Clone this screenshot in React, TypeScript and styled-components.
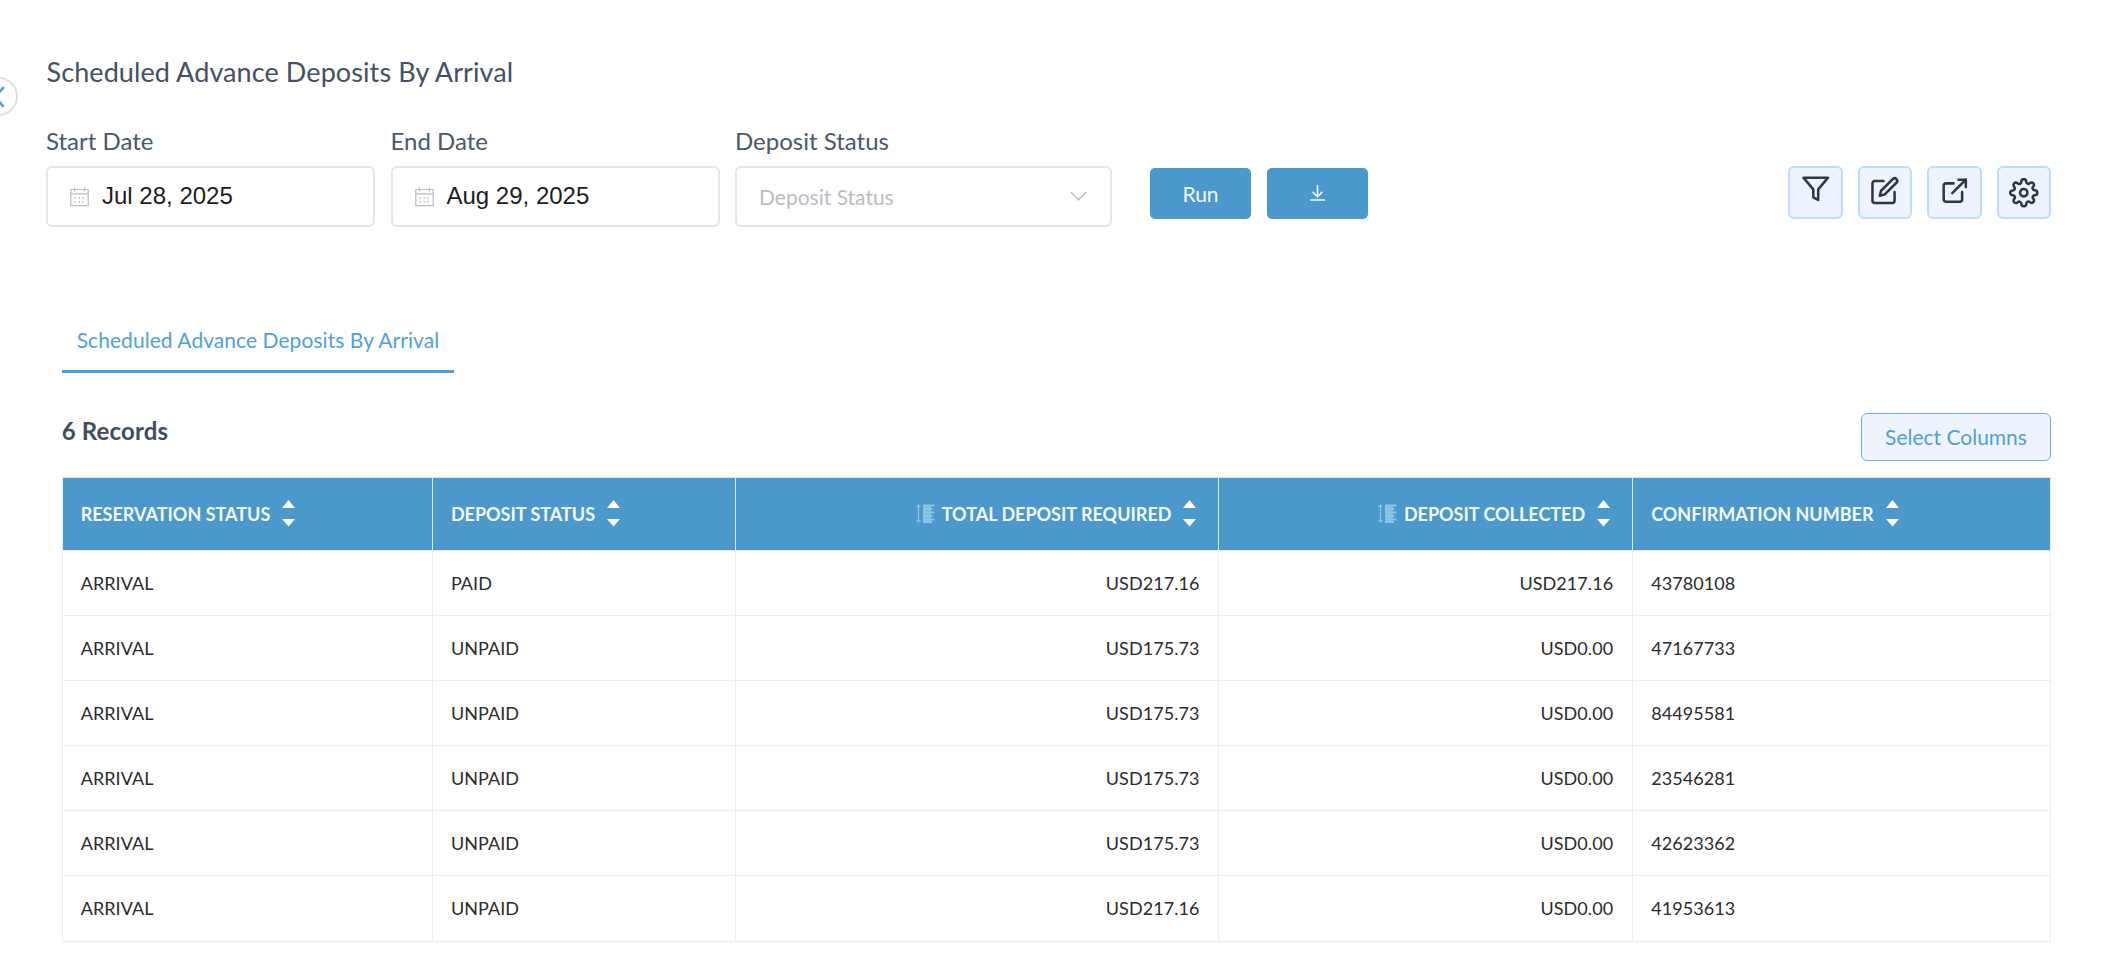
import React from "react";
import styled, { createGlobalStyle } from "styled-components";
import { FiEdit, FiExternalLink, FiFilter, FiSettings } from "react-icons/fi";

const GlobalStyle = createGlobalStyle`
  *, *::before, *::after { box-sizing: border-box; }
  body {
    margin: 0;
    background: #fff;
    color: #2b2b2b;
    font-family: Lato, "Liberation Sans", sans-serif;
  }
  button, input { font: inherit; }
`;

const Page = styled.main`
  position: relative;
  width: 2112px;
  height: 960px;
  overflow: hidden;
  padding: 52px 61px 0 46px;
`;

const CollapseButton = styled.button`
  position: absolute;
  left: -21px;
  top: 77px;
  width: 39px;
  height: 39px;
  padding: 0;
  display: flex;
  align-items: center;
  justify-content: center;
  border: 2px solid #dfe0e4;
  border-radius: 50%;
  background: #fff;
  color: #459fe0;
`;

const Title = styled.h1`
  margin: 0;
  height: 40px;
  padding-left: 0.5px;
  line-height: 40px;
  font-size: 27px;
  font-weight: 400;
  letter-spacing: 0.09px;
  color: #435163;
`;

const Filters = styled.section`
  display: flex;
  align-items: flex-start;
  height: 211px;
  padding-top: 35px;
`;

const Field = styled.label<{ $width: number }>`
  display: flex;
  flex-direction: column;
  width: ${(p) => p.$width}px;
  margin-right: 15.5px;
  font-size: 24px;
  line-height: 28px;
  color: #4a5868;
`;

const Control = styled.span`
  display: flex;
  align-items: center;
  height: 60.5px;
  margin-top: 11.3px;
  padding: 0 23px 0 22px;
  border: 2px solid #e3e4ec;
  border-radius: 6px;
  background: #fff;
`;

const DateValue = styled.span`
  margin-left: 13px;
  padding-bottom: 2px;
  font-family: "Liberation Sans", Arial, sans-serif;
  font-size: 24px;
  color: #1d1d1d;
`;

const Placeholder = styled.span`
  flex: 1;
  font-size: 21px;
  color: #b9bcc3;
`;

const Actions = styled.div`
  display: flex;
  gap: 15.5px;
  margin: 40.7px 0 0 22.5px;
`;

const ActionButton = styled.button`
  display: flex;
  align-items: center;
  justify-content: center;
  width: 101px;
  height: 51.3px;
  padding: 0;
  border: 0;
  border-radius: 5px;
  background: #4b99cc;
  color: #f3f8fc;
  font-size: 21px;
`;

const Tools = styled.div`
  display: flex;
  gap: 15px;
  margin: 39.3px 0 0 auto;
`;

const ToolButton = styled.button<{ $lift?: number }>`
  display: flex;
  align-items: center;
  justify-content: center;
  width: 54.5px;
  height: 53px;
  padding: 0 0 ${(p) => p.$lift ?? 0}px;
  border: 2px solid #bfdcfb;
  border-radius: 6px;
  background: #edf4fe;
  color: #303743;
  svg { width: 29.5px; height: 29.5px; stroke-width: 2.05; }
`;

const Report = styled.section`
  padding-left: 15.7px;
`;

const Tab = styled.button`
  display: block;
  height: 70px;
  padding: 3px 15px 0;
  line-height: 67px;
  border: 0;
  border-bottom: 3px solid #4b9fd6;
  background: none;
  font-size: 21px;
  letter-spacing: 0.055px;
  color: #4fa2d5;
`;

const ReportBar = styled.div`
  display: flex;
  justify-content: space-between;
  align-items: flex-start;
  height: 103.5px;
  padding-top: 39.5px;
`;

const RecordCount = styled.h2`
  margin: 0;
  line-height: 36px;
  font-size: 24px;
  font-weight: 700;
  letter-spacing: 0.15px;
  color: #414d5c;
`;

const SelectColumns = styled.button`
  width: 190px;
  height: 48px;
  padding: 0;
  border: 1.5px solid #6fb1df;
  border-radius: 6px;
  background: #edf4fe;
  font-size: 21px;
  color: #4fa0d2;
`;

const Table = styled.div`
  width: 1989.5px;
  border: 1.5px solid #ededed;
  border-top-color: #e2e2e8;
`;

const Row = styled.div<{ $head?: boolean }>`
  display: grid;
  grid-template-columns: 370.2px 303.3px 483.3px 413.7px 1fr;
  height: ${(p) => (p.$head ? 73 : 65)}px;
  background: ${(p) => (p.$head ? "#4b99cc" : "#fff")};
  &:not(:last-child) { border-bottom: 1.5px solid #ededed; }
`;

const Cell = styled.div<{ $end?: boolean }>`
  display: flex;
  align-items: center;
  justify-content: ${(p) => (p.$end ? "flex-end" : "flex-start")};
  padding: 0 19px 0 18px;
  font-size: 18px;
  letter-spacing: 0.06px;
  white-space: nowrap;
  &:not(:last-child) { border-right: 1.5px solid #ededed; }
`;

const HeadCell = styled(Cell)`
  padding-right: 22px;
  font-weight: 700;
  letter-spacing: 0;
  color: #f4f9fd;
  &:not(:last-child) { border-right-color: #dbe6ef; }
`;

const SortIcon = styled.svg`
  width: 13px;
  height: 27px;
  margin-left: 12px;
  fill: #fff;
`;

const RulerIcon = styled.svg`
  width: 19px;
  height: 19px;
  margin-right: 7px;
  fill: none;
  stroke: #8ac6e5;
`;

const LineIcon = styled.svg`
  fill: none;
  stroke: currentColor;
`;

const CalendarIcon = () => (
  <LineIcon width="19" height="20" viewBox="0 0 19 20" color="#b9bcc3">
    <path d="M.8 2.500h17.400v16.200H.8zM.8 6.800h17.400M4.500.5v4M14.500.5v4" strokeWidth="1.200" />
    <path d="M8.500 11h1.500M12 11h1.500M4.500 11h1.500M4.500 15h1.500M8.500 15h1.500M12 15h1.500" strokeWidth="1.400" />
  </LineIcon>
);

const columns = [
  { label: "RESERVATION STATUS" },
  { label: "DEPOSIT STATUS" },
  { label: "TOTAL DEPOSIT REQUIRED", numeric: true },
  { label: "DEPOSIT COLLECTED", numeric: true },
  { label: "CONFIRMATION NUMBER" },
];

const records = [
  ["ARRIVAL", "PAID", "USD217.16", "USD217.16", "43780108"],
  ["ARRIVAL", "UNPAID", "USD175.73", "USD0.00", "47167733"],
  ["ARRIVAL", "UNPAID", "USD175.73", "USD0.00", "84495581"],
  ["ARRIVAL", "UNPAID", "USD175.73", "USD0.00", "23546281"],
  ["ARRIVAL", "UNPAID", "USD175.73", "USD0.00", "42623362"],
  ["ARRIVAL", "UNPAID", "USD217.16", "USD0.00", "41953613"],
];

export default function App() {
  return (
    <Page>
      <GlobalStyle />
      <CollapseButton aria-label="Collapse">
        <LineIcon width="14" height="22" viewBox="0 0 14 22" strokeWidth="2.600" strokeLinecap="round">
          <path d="M11 2 3 11l8 9" />
        </LineIcon>
      </CollapseButton>
      <Title>Scheduled Advance Deposits By Arrival</Title>
      <Filters>
        <Field $width={329}>
          Start Date
          <Control><CalendarIcon /><DateValue>Jul 28, 2025</DateValue></Control>
        </Field>
        <Field $width={329}>
          End Date
          <Control><CalendarIcon /><DateValue>Aug 29, 2025</DateValue></Control>
        </Field>
        <Field $width={377}>
          Deposit Status
          <Control>
            <Placeholder>Deposit Status</Placeholder>
            <LineIcon width="17" height="11" viewBox="0 0 17 11" color="#b9bcc3" strokeWidth="1.400">
              <path d="M1 1l7.500 8L16 1" />
            </LineIcon>
          </Control>
        </Field>
        <Actions>
          <ActionButton>Run</ActionButton>
          <ActionButton aria-label="Download">
            <LineIcon width="17" height="16" viewBox="0 0 17 16" strokeWidth="1.600">
              <path d="M8.500 0v11.500M3.500 6.800l5 5 5-5M1 15h15" />
            </LineIcon>
          </ActionButton>
        </Actions>
        <Tools>
          <ToolButton $lift={8} aria-label="Filter"><FiFilter /></ToolButton>
          <ToolButton $lift={4} aria-label="Edit"><FiEdit /></ToolButton>
          <ToolButton $lift={4} aria-label="Open"><FiExternalLink /></ToolButton>
          <ToolButton aria-label="Settings"><FiSettings /></ToolButton>
        </Tools>
      </Filters>
      <Report>
        <Tab>Scheduled Advance Deposits By Arrival</Tab>
        <ReportBar>
          <RecordCount>6 Records</RecordCount>
          <SelectColumns>Select Columns</SelectColumns>
        </ReportBar>
        <Table>
          <Row $head>
            {columns.map((c) => (
              <HeadCell key={c.label} $end={c.numeric}>
                {c.numeric && (
                  <RulerIcon viewBox="0 0 19 19">
                    <path d="M2.500 1v17M.500 3l2-2 2 2M.500 16l2 2 2-2" strokeWidth="1.200" />
                    <path d="M7 1.500h11.500M7 5h9.500M7 8.500h11.500M7 12h9.500M7 15.500h11.500M7 18h9" strokeWidth="1.800" />
                    <path d="M11 1v18" strokeWidth="8" opacity=".8" />
                  </RulerIcon>
                )}
                {c.label}
                <SortIcon viewBox="0 0 13 27"><path d="M0 8 6.500 0 13 8zM0 19h13l-6.500 7.500z" /></SortIcon>
              </HeadCell>
            ))}
          </Row>
          {records.map((r) => (
            <Row key={r[4]}>
              {r.map((v, i) => <Cell key={i} $end={columns[i].numeric}>{v}</Cell>)}
            </Row>
          ))}
        </Table>
      </Report>
    </Page>
  );
}
